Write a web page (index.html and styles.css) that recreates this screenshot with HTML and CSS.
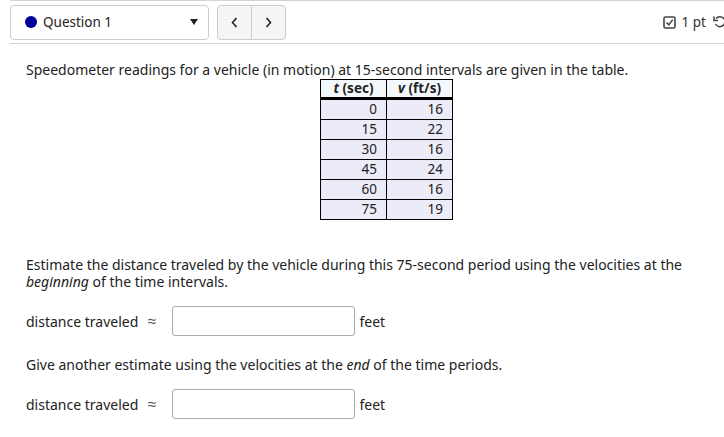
FILE: index.html
```html
<!DOCTYPE html>
<html>
<head>
<meta charset="utf-8">
<link rel="stylesheet" href="styles.css">
</head>
<body>
<div class="topbar">
  <div class="qselect">
    <span class="dot"></span>
    <span class="qlabel">Question 1</span>
    <svg class="caret" width="8" height="6" viewBox="0 0 8 6"><path d="M0 0 L8 0 L4 6 Z" fill="#222"/></svg>
  </div>
  <div class="nav">
    <span class="navbtn"><svg width="7" height="11" viewBox="0 0 7 11"><path d="M5.5 1 L1.5 5.5 L5.5 10" fill="none" stroke="#222" stroke-width="1.6"/></svg></span>
    <span class="navbtn"><svg width="7" height="11" viewBox="0 0 7 11"><path d="M1.5 1 L5.5 5.5 L1.5 10" fill="none" stroke="#222" stroke-width="1.6"/></svg></span>
  </div>
  <div class="points">
    <svg class="chk" width="13" height="13" viewBox="0 0 13 13"><rect x="1" y="1" width="11" height="11" rx="1.5" fill="none" stroke="#444" stroke-width="1.6"/><path d="M3.5 6.5 L5.8 8.8 L9.8 3.6" fill="none" stroke="#444" stroke-width="1.5"/></svg>
    <span class="pt">1 pt</span>
    <svg class="undo" width="14" height="14" viewBox="0 0 14 14"><path d="M3 3.5 A5 5 0 1 1 2.5 9" fill="none" stroke="#444" stroke-width="1.5"/><path d="M1 1.5 L1 5.5 L5 5.5" fill="none" stroke="#444" stroke-width="1.5"/></svg>
  </div>
</div>
<div class="content">
  <p class="intro">Speedometer readings for a vehicle (in motion) at 15-second intervals are given in the table.</p>
  <table class="data">
    <thead>
      <tr><th><i>t</i> (sec)</th><th><i>v</i> (ft/s)</th></tr>
    </thead>
    <tbody>
      <tr><td>0</td><td>16</td></tr>
      <tr><td>15</td><td>22</td></tr>
      <tr><td>30</td><td>16</td></tr>
      <tr><td>45</td><td>24</td></tr>
      <tr><td>60</td><td>16</td></tr>
      <tr><td>75</td><td>19</td></tr>
    </tbody>
  </table>
  <p class="q1">Estimate the distance traveled by the vehicle during this 75-second period using the velocities at the <i>beginning</i> of the time intervals.</p>
  <div class="answer">
    <span class="lbl">distance traveled</span>
    <span class="approx">≈</span>
    <span class="box"></span>
    <span class="unit">feet</span>
  </div>
  <p class="q2">Give another estimate using the velocities at the <i>end</i> of the time periods.</p>
  <div class="answer">
    <span class="lbl">distance traveled</span>
    <span class="approx">≈</span>
    <span class="box"></span>
    <span class="unit">feet</span>
  </div>
</div>
</body>
</html>
```
FILE: styles.css
```css
html, body {
  margin: 0;
  padding: 0;
  background: #fff;
}
body {
  font-family: "Noto Sans", "Open Sans", sans-serif;
  font-size: 14px;
  color: #222;
  width: 724px;
  overflow: hidden;
}
.topbar {
  margin-left: 10px;
  height: 42px;
  border-top: 1px solid #d4d4d4;
  border-bottom: 1px solid #d4d4d4;
  display: flex;
  align-items: center;
}
.qselect {
  width: 197px;
  height: 33px;
  border: 1px solid #ccc;
  border-radius: 4px;
  display: flex;
  align-items: center;
}
.dot {
  width: 12px;
  height: 12px;
  border-radius: 50%;
  background: #000099;
  margin-left: 14px;
  margin-right: 6px;
}
.qlabel {
  font-size: 13.5px;
  color: #222;
  flex: 1;
}
.caret {
  margin-right: 10px;
}
.nav {
  margin-left: 8px;
  height: 33px;
  display: flex;
  border: 1px solid #ccc;
  border-radius: 4px;
  background: #f5f5f5;
  overflow: hidden;
}
.navbtn {
  width: 33px;
  display: flex;
  align-items: center;
  justify-content: center;
}
.navbtn + .navbtn {
  border-left: 1px solid #ccc;
}
.points {
  margin-left: auto;
  display: flex;
  align-items: center;
  margin-right: -3px;
}
.chk {
  margin-right: 6px;
}
.pt {
  font-size: 13.5px;
  color: #333;
  margin-right: 7px;
}
.content {
  padding-left: 26px;
  padding-right: 26px;
}
.intro {
  margin: 17px 0 0;
  line-height: 17px;
}
.data {
  border-collapse: collapse;
  margin-left: 294px;
  margin-top: 1px;
}
.data th {
  background: #f3f8fc;
  border: 1px solid #000;
  border-bottom: 3px solid #000;
  height: 17px;
  padding: 0 5px;
  font-weight: bold;
  text-align: center;
  font-size: 13.5px;
  line-height: 15px;
}
.data th:first-child { width: 55px; }
.data th:last-child { width: 55px; }
.data td {
  background: #ececf8;
  border: 1px solid #000;
  height: 19px;
  padding: 0 9px;
  text-align: right;
  font-size: 13.5px;
  line-height: 17px;
}
.q1 {
  margin: 36px 0 0;
  line-height: 17px;
}
.answer {
  display: flex;
  align-items: center;
  margin-top: 16px;
}
.lbl {
  margin-right: 9px;
}
.approx {
  color: #556;
  font-size: 16px;
  margin-right: 16px;
}
.box {
  width: 181px;
  height: 28px;
  border: 1px solid #aaa;
  border-radius: 3px;
}
.unit {
  margin-left: 4px;
}
.q2 {
  margin: 20px 0 0;
  line-height: 17px;
}
```
